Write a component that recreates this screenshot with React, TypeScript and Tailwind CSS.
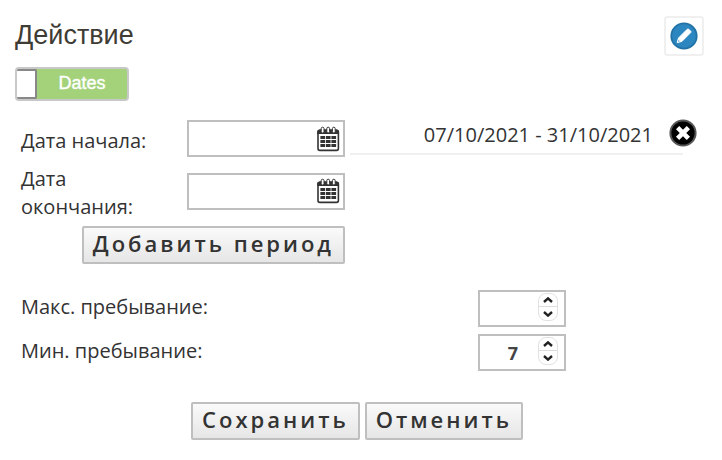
import { useState } from "react";

const PERIODS = ["07/10/2021 - 31/10/2021"];

const BUTTON_CLASS =
  "h-[38px] cursor-pointer rounded-xs border-2 border-[#bfbfbf] bg-linear-to-b from-[#fafafa] to-[#e6e6e6] px-[9px] pb-1 text-[22px] leading-[30px] font-semibold tracking-[3px] whitespace-nowrap text-[#333]";

function PencilIcon() {
  return (
    <svg width="28" height="28" viewBox="0 0 28 28" aria-hidden="true">
      <circle cx="14" cy="14" r="12.7" fill="#2c86bf" stroke="#2272a6" strokeWidth="1.8" />
      <path
        d="M7.2 20.6l1.3-4.6 8.8-8.8q.7-.6 1.4 0l2 2q.6.7 0 1.4l-8.8 8.8z"
        fill="#fff"
        stroke="#fff"
        strokeLinejoin="round"
      />
      <path d="M8 19.8l.6-1.8 1.2 1.2z" fill="#2c86bf" />
    </svg>
  );
}

function CalendarIcon() {
  return (
    <svg width="24" height="26" viewBox="0 0 24 26" aria-hidden="true">
      <rect x="2" y="4.4" width="20.4" height="20" rx="1.8" fill="none" stroke="#333" strokeWidth="1.6" />
      <path d="M1.2 8V5.6Q1.2 3.6 3.4 3.4h17.4q2.2.2 2.2 2.2V8z" fill="#333" />
      {[6.6, 12.2, 17.8].map((x) => (
        <rect key={x} x={x - 1.4} y="1.2" width="2.8" height="5.8" rx="1.4" fill="#fff" stroke="#333" strokeWidth="1" />
      ))}
      {[10, 14, 18].map((y) =>
        [4.4, 9.9, 15.4].map((x) => (
          <rect key={`${x}-${y}`} x={x} y={y} width="4.7" height="3" fill="#333" />
        )),
      )}
    </svg>
  );
}

function RemoveIcon() {
  return (
    <svg width="28" height="28" viewBox="0 0 28 28" aria-hidden="true">
      <circle cx="14" cy="14" r="12.6" fill="#000" stroke="#555" strokeWidth="2" />
      <path d="M8.6 8.6l10.8 10.8M19.4 8.6L8.6 19.4" stroke="#fff" strokeWidth="4.6" />
    </svg>
  );
}

function Chevron({ down = false }: { down?: boolean }) {
  return (
    <svg width="10" height="6" viewBox="0 0 10 6" aria-hidden="true">
      <path
        d={down ? "M1 1l4 3.6 4-3.6" : "M1 5l4-3.6 4 3.6"}
        fill="none"
        stroke="#222"
        strokeWidth="2.4"
      />
    </svg>
  );
}

function DateField({ id, label }: { id: string; label: string }) {
  const [value, setValue] = useState("");

  return (
    <div className="flex items-center">
      <label htmlFor={id} className="w-[166px] shrink-0 pt-1 pr-8">
        {label}
      </label>
      <div className="flex h-[37px] flex-1 items-center border-2 border-[#bfbfbf] pr-[3px]">
        <input
          id={id}
          type="text"
          value={value}
          onChange={(e) => setValue(e.target.value)}
          className="h-full w-full min-w-0 px-2 outline-none"
        />
        <button type="button" aria-label={`Календарь: ${label}`} className="shrink-0 cursor-pointer">
          <CalendarIcon />
        </button>
      </div>
    </div>
  );
}

function StayField({ id, label, initial }: { id: string; label: string; initial: string }) {
  const [value, setValue] = useState(initial);

  function step(delta: number) {
    setValue(String(Math.max(0, Number(value) + delta)));
  }

  return (
    <div className="flex items-center justify-between">
      <label htmlFor={id} className="pb-1">
        {label}
      </label>
      <div className="flex h-[37px] w-[88px] items-start border-2 border-[#bfbfbf] pr-1.5">
        <input
          id={id}
          type="text"
          inputMode="numeric"
          value={value}
          onChange={(e) => setValue(e.target.value)}
          className="h-full w-full min-w-0 pl-2 text-center text-lg font-bold text-[#444] outline-none"
        />
        <div className="mt-px flex w-5 shrink-0 flex-col rounded-lg border border-[#e2e2e2]">
          <button
            type="button"
            aria-label="Больше"
            onClick={() => step(1)}
            className="flex h-[13px] cursor-pointer items-center justify-center border-b border-[#ddd]"
          >
            <Chevron />
          </button>
          <button
            type="button"
            aria-label="Меньше"
            onClick={() => step(-1)}
            className="flex h-[13px] cursor-pointer items-center justify-center"
          >
            <Chevron down />
          </button>
        </div>
      </div>
    </div>
  );
}

export default function App() {
  const [datesOn, setDatesOn] = useState(true);
  const [periods, setPeriods] = useState(PERIODS);

  return (
    <main className="bg-white px-[15px] pt-4 pb-5 font-['Open_Sans','Noto_Sans',sans-serif] text-xl leading-7 text-[#333]">
      <header className="flex items-start justify-between pr-[3px]">
        <h1 className="pt-[3px] font-['Liberation_Sans',Arial,sans-serif] text-[27px] leading-8 text-[#3f3c35]">
          Действие
        </h1>
        <button
          type="button"
          aria-label="Редактировать"
          className="flex size-10 cursor-pointer items-center justify-center rounded-sm border-2 border-[#f0f0f0]"
        >
          <PencilIcon />
        </button>
      </header>

      {/* Dates switch */}
      <label className="mt-[11px] flex h-[34px] w-[114px] cursor-pointer items-stretch rounded-sm border-2 border-[#c8c8c8] bg-[#a3d27a]">
        <input
          type="checkbox"
          checked={datesOn}
          onChange={(e) => setDatesOn(e.target.checked)}
          className="w-5 shrink-0 cursor-pointer appearance-none rounded-xs border-2 border-l-0 border-[#888] bg-white"
        />
        <span className="flex-1 text-center font-['Liberation_Sans',Arial,sans-serif] text-lg leading-7 text-white [-webkit-text-stroke:0.4px_white]">
          Dates
        </span>
      </label>

      {/* Date range and the periods already added */}
      <section className="mt-[19px] flex items-start gap-[5px] pl-1.5">
        <div className="flex w-[324px] shrink-0 flex-col gap-1">
          <DateField id="date-start" label="Дата начала:" />
          <DateField id="date-end" label="Дата окончания:" />
          <button type="button" className={`mt-px self-end ${BUTTON_CLASS}`}>
            Добавить период
          </button>
        </div>
        <ul className="mr-6 flex-1">
          {periods.map((period) => (
            <li key={period} className="relative border-b-2 border-[#f0f0f0] pt-px pr-[30px] pb-1 text-right">
              {period}
              <button
                type="button"
                aria-label="Удалить период"
                onClick={() => setPeriods(periods.filter((p) => p !== period))}
                className="absolute top-0 -right-3.5 -mt-px cursor-pointer"
              >
                <RemoveIcon />
              </button>
            </li>
          ))}
        </ul>
      </section>

      <section className="mt-[26px] flex max-w-[551px] flex-col gap-[7px] pl-1.5">
        <StayField id="max-stay" label="Макс. пребывание:" initial="" />
        <StayField id="min-stay" label="Мин. пребывание:" initial="7" />
      </section>

      <footer className="mt-[31px] flex justify-center gap-[5px] pr-2">
        <button type="button" className={BUTTON_CLASS}>
          Сохранить
        </button>
        <button type="button" className={BUTTON_CLASS}>
          Отменить
        </button>
      </footer>
    </main>
  );
}
